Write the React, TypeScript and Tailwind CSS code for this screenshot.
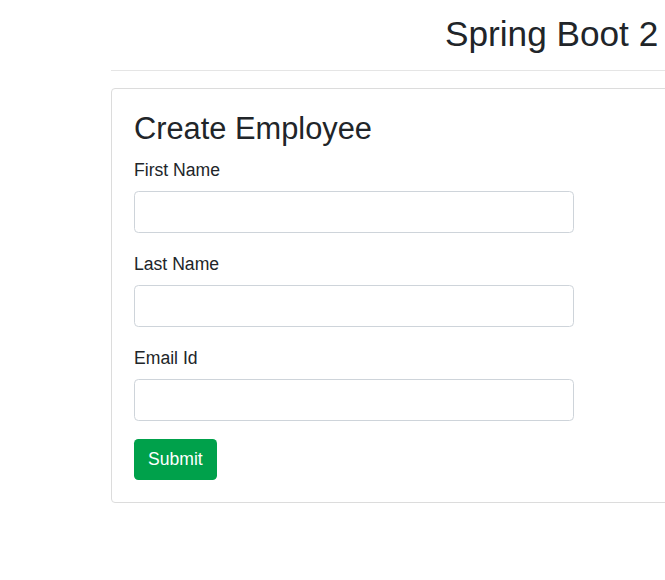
export default function App() {
  const fields = ["First Name", "Last Name", "Email Id"];

  return (
    <div
      className="w-[665px] h-[580px] overflow-hidden bg-white text-[#212529]"
      style={{ fontFamily: '"Liberation Sans", Arial, sans-serif' }}
    >
      <div className="pl-[111px] w-[800px]">
        {/* Page heading */}
        <h2 className="pt-[13px] pl-[334px] text-[35.2px] leading-[1.2] whitespace-nowrap">
          Spring Boot 2
        </h2>
        <hr className="mt-[15px] border-t border-[#e5e5e5]" />

        {/* Form card */}
        <div className="mt-[17px] w-[640px] rounded-[4px] border border-[#dcdcdc] px-[22px] pt-[22px] pb-[22px]">
          <h3 className="text-[30.8px] leading-[1.2] mb-[8.8px]">Create Employee</h3>
          <form onSubmit={(e) => e.preventDefault()}>
            {fields.map((label) => (
              <div key={label} className="mb-[18px]">
                <label className="block text-[17.6px] leading-[26.4px] mb-[8px]">{label}</label>
                <input
                  type="text"
                  className="block w-[440px] h-[41.5px] rounded-[4.4px] border border-[#ced4da] px-3 text-[17.6px] outline-none"
                />
              </div>
            ))}
            <button
              type="submit"
              className="block h-[41px] px-[14px] rounded-[4.4px] bg-[#00a14b] text-white text-[17.6px] leading-[26.4px]"
            >
              Submit
            </button>
          </form>
        </div>
      </div>
    </div>
  );
}
